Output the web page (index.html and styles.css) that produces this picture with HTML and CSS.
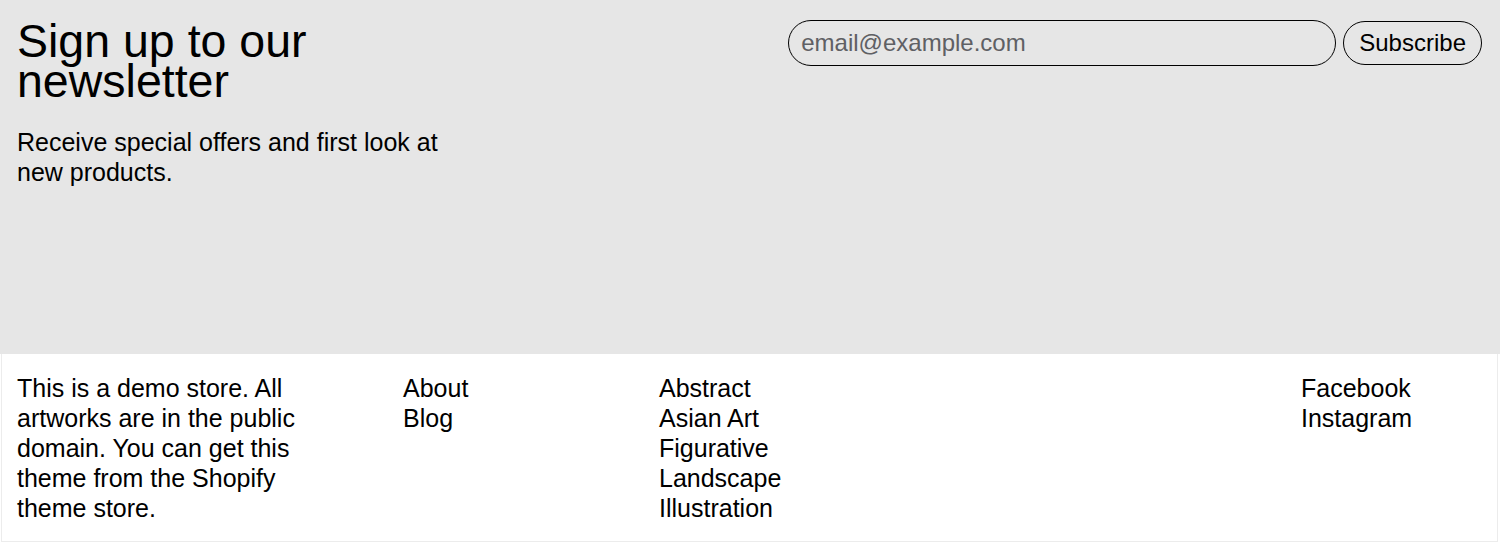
FILE: index.html
```html
<!DOCTYPE html>
<html lang="en">
<head>
<meta charset="utf-8">
<title>Newsletter</title>
<link rel="stylesheet" href="styles.css">
</head>
<body>
<section class="newsletter">
  <div class="intro">
    <h2 class="title">Sign up to our newsletter</h2>
    <p class="lead">Receive special offers and first look at new products.</p>
  </div>
  <form class="signup">
    <input class="email" type="email" placeholder="email@example.com">
    <button class="subscribe" type="button">Subscribe</button>
  </form>
</section>
<footer class="footer">
  <p class="about">This is a demo store. All artworks are in the public domain. You can get this theme from the Shopify theme store.</p>
  <ul class="links">
    <li>About</li>
    <li>Blog</li>
  </ul>
  <ul class="links">
    <li>Abstract</li>
    <li>Asian Art</li>
    <li>Figurative</li>
    <li>Landscape</li>
    <li>Illustration</li>
  </ul>
  <ul class="links">
    <li>Facebook</li>
    <li>Instagram</li>
  </ul>
</footer>
</body>
</html>
```
FILE: styles.css
```css
* { box-sizing: border-box; }
html, body { margin: 0; padding: 0; }
body {
  font-family: "Liberation Sans", Arial, Helvetica, sans-serif;
  color: #000;
  background: #fff;
  width: 1500px;
  height: 542px;
  overflow: hidden;
}
.newsletter {
  background: #e6e6e6;
  height: 354px;
  padding: 20px 18px 0 17px;
  display: flex;
  justify-content: space-between;
  align-items: flex-start;
}
.intro { width: 445px; padding-top: 1px; }
.title {
  margin: 0;
  font-size: 46.5px;
  line-height: 40px;
  font-weight: 400;
}
.lead {
  margin: 26px 0 0;
  font-size: 25px;
  line-height: 30px;
}
.signup {
  display: flex;
  gap: 7px;
  align-items: center;
}
.email {
  width: 548px;
  height: 46px;
  border: 1px solid #000;
  border-radius: 23px;
  background: transparent;
  padding: 0 12px;
  font-family: inherit;
  font-size: 24px;
  color: #000;
  outline: none;
}
.email::placeholder { color: #5f6064; }
.subscribe {
  height: 44px;
  padding: 0 15px;
  border: 1px solid #000;
  border-radius: 22px;
  background: transparent;
  font-family: inherit;
  font-size: 24px;
  color: #000;
}
.footer {
  height: 188px;
  margin: 0 2px 1px 1px;
  border: 1px solid #ececec;
  border-top: none;
  padding: 19px 0 0 15px;
  display: grid;
  grid-template-columns: 386px 256px 642px 1fr;
  align-items: start;
  font-size: 25px;
  line-height: 30px;
}
.about { margin: 0; width: 325px; }
.links { list-style: none; margin: 0; padding: 0; }
```
